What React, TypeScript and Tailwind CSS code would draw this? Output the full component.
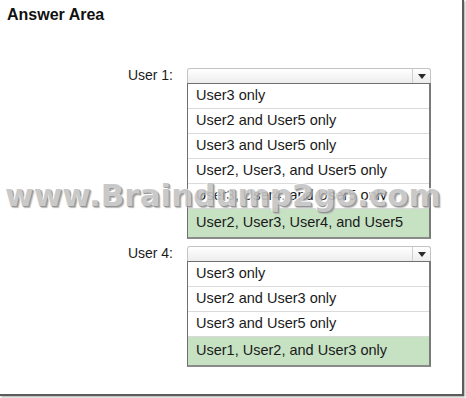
import React from "react";

interface DropdownProps {
  label: string;
  options: string[];
  selected: number;
  className?: string;
}

const Dropdown = ({ label, options, selected, className }: DropdownProps) => {
  return (
    <div className={`flex items-start gap-[14px] ${className ?? ""}`}>
      <div className="w-[173px] h-[15px] leading-[15px] text-right text-[14px] text-[#1c1c1c]">
        {label}
      </div>
      <div className="w-[244px]">
        {/* closed select header */}
        <div className="flex h-[15px] rounded-t-[3px] border border-b-0 border-[#c4c4c4] bg-linear-to-b from-white to-[#ededed]">
          <div className="flex-1" />
          <div className="flex w-[18px] items-center justify-center border-l border-[#cfcfcf]">
            <svg width="8" height="5" viewBox="0 0 8 5">
              <polygon points="0,0 8,0 4,5" fill="#2a2a2a" />
            </svg>
          </div>
        </div>
        {/* open list */}
        <div className="border border-t-[1px] border-[#6f6f6f] border-r-[2px] border-b-[2px] border-r-[#7a7a7a] border-b-[#8a8a8a] bg-white">
          {options.map((opt, i) =>
            i === selected ? (
              <div
                key={opt}
                className="flex h-[28px] items-center bg-[#c6e2c3] pl-[8px] text-[14.5px] text-[#1a1a1a]"
              >
                {opt}
              </div>
            ) : (
              <div
                key={opt}
                className="flex h-[25px] items-center border-b border-[#dadada] pl-[8px] text-[14.5px] text-[#1a1a1a]"
              >
                {opt}
              </div>
            )
          )}
        </div>
      </div>
    </div>
  );
};

export default function App() {
  return (
    <div
      className="relative h-[398px] w-[466px] overflow-hidden bg-white"
      style={{ fontFamily: '"Liberation Sans", Arial, sans-serif' }}
    >
      <div className="h-[396px] w-[464px] border-r-2 border-b-2 border-[#5c5c5c] shadow-[1px_1px_2px_rgba(0,0,0,0.35)]">
        <h1 className="pl-[7px] pt-[6px] text-[16px] leading-[18px] font-bold text-[#111]">
          Answer Area
        </h1>

        <Dropdown
          className="mt-[44px]"
          label="User 1:"
          selected={5}
          options={[
            "User3 only",
            "User2 and User5 only",
            "User3 and User5 only",
            "User2, User3, and User5 only",
            "User3, User4, and User5 only",
            "User2, User3, User4, and User5",
          ]}
        />

        <Dropdown
          className="mt-[7px]"
          label="User 4:"
          selected={3}
          options={[
            "User3 only",
            "User2 and User3 only",
            "User3 and User5 only",
            "User1, User2, and User3 only",
          ]}
        />
      </div>

      {/* watermark */}
      <div className="pointer-events-none absolute left-[5px] top-[180px] font-['DejaVu_Sans',sans-serif] text-[31px] leading-[31px] font-bold whitespace-nowrap text-[#c4c4c4] opacity-90 [text-shadow:-1px_-1px_0_#ffffff,1px_1px_0_#8a8a8a,2px_2px_1px_#b4b4b4]">
        www.Braindump2go.com
      </div>
    </div>
  );
}
